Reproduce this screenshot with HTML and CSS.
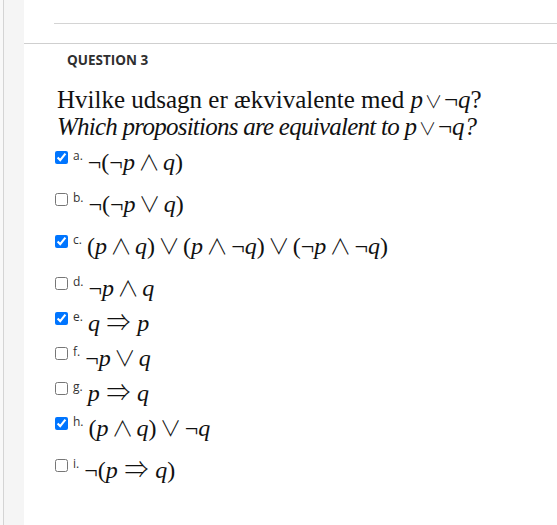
FILE: index.html
```html
<!DOCTYPE html>
<html>
<head>
<meta charset="utf-8">
<link rel="stylesheet" href="styles.css">
</head>
<body>
<div class="page">
  <div class="rail"></div>
  <div class="main">
    <div class="topbar"><div class="topline"></div></div>
    <div class="question">
      <div class="qtitle">QUESTION 3</div>
      <div class="qtext">
        <div class="qline">Hvilke udsagn er ækvivalente med <span class="m"><i>p</i><span class="op">∨</span>¬<i>q</i></span>?</div>
        <div class="qline it">Which propositions are equivalent to <span class="m"><i>p</i><span class="op">∨</span>¬<i>q</i></span>?</div>
      </div>
      <div class="options">
        <label class="opt tall"><input type="checkbox" checked><span class="lbl">a.</span><span class="m">¬(¬<i>p</i><span class="op">∧</span><i>q</i>)</span></label>
        <label class="opt tall"><input type="checkbox"><span class="lbl">b.</span><span class="m">¬(¬<i>p</i><span class="op">∨</span><i>q</i>)</span></label>
        <label class="opt tall"><input type="checkbox" checked><span class="lbl">c.</span><span class="m">(<i>p</i><span class="op">∧</span><i>q</i>)<span class="op">∨</span>(<i>p</i><span class="op">∧</span>¬<i>q</i>)<span class="op">∨</span>(¬<i>p</i><span class="op">∧</span>¬<i>q</i>)</span></label>
        <label class="opt"><input type="checkbox"><span class="lbl">d.</span><span class="m">¬<i>p</i><span class="op">∧</span><i>q</i></span></label>
        <label class="opt"><input type="checkbox" checked><span class="lbl">e.</span><span class="m"><i>q</i><span class="op arrow">⇒</span><i>p</i></span></label>
        <label class="opt"><input type="checkbox"><span class="lbl">f.</span><span class="m">¬<i>p</i><span class="op">∨</span><i>q</i></span></label>
        <label class="opt"><input type="checkbox"><span class="lbl">g.</span><span class="m"><i>p</i><span class="op arrow">⇒</span><i>q</i></span></label>
        <label class="opt tall"><input type="checkbox" checked><span class="lbl">h.</span><span class="m">(<i>p</i><span class="op">∧</span><i>q</i>)<span class="op">∨</span>¬<i>q</i></span></label>
        <label class="opt tall"><input type="checkbox"><span class="lbl">i.</span><span class="m">¬(<i>p</i><span class="op arrow">⇒</span><i>q</i>)</span></label>
      </div>
    </div>
  </div>
</div>
</body>
</html>
```
FILE: styles.css
```css
html, body {
  margin: 0;
  padding: 0;
  background: #fff;
}
.page {
  display: flex;
  min-height: 525px;
}
.rail {
  width: 3px;
  background: #f8f8f8;
  border-right: 1px solid #d4d4d4;
  flex: none;
}
.main {
  flex: 1;
  margin-left: 20px;
  background: #fff;
  box-shadow: -20px 0 0 #f5f5f5;
}
.topbar {
  height: 44px;
  border-bottom: 1px solid #cfcfcf;
  box-sizing: border-box;
}
.topline {
  margin-left: 30px;
  height: 24px;
  border-bottom: 1px solid #d4d4d4;
  box-sizing: border-box;
}
.question {
  padding: 6px 0 0 31px;
}
.qtitle {
  font-family: "Open Sans", sans-serif;
  font-weight: 700;
  font-size: 13.5px;
  color: #2f2f2f;
  margin-left: 12px;
  line-height: 20px;
}
.qtext {
  margin-top: 16px;
  font-family: "Liberation Serif", "DejaVu Serif", serif;
  font-size: 25px;
  color: #111;
  line-height: 27px;
  padding-left: 2px;
}
.qline.it {
  font-style: italic;
  letter-spacing: -0.75px;
}
.m {
  font-family: "Liberation Serif", "DejaVu Serif", serif;
  font-style: normal;
  letter-spacing: 0;
}
.m i {
  font-style: italic;
}
.op {
  font-family: "Noto Sans CJK JP", "DejaVu Sans", sans-serif;
  font-weight: 300;
  font-style: normal;
  font-size: 0.9em;
  line-height: 0;
  margin: 0 0.15em;
}
.qtext .op {
  font-size: 0.7em;
  margin: 0 0.1em;
}
.op.arrow {
  font-size: 1em;
  margin: 0 0.28em;
}
.options {
  margin-top: 8px;
}
.opt {
  display: flex;
  align-items: flex-start;
  height: 35px;
}
.opt.tall {
  height: 42px;
}
.opt input {
  margin: 3px 5px 0 0;
  width: 13px;
  height: 13px;
  flex: none;
  accent-color: #0075ff;
}
.lbl {
  font-family: "Open Sans", sans-serif;
  font-size: 12px;
  line-height: 14px;
  color: #333;
  margin-top: 1px;
  margin-right: 5px;
}
.opt .m {
  font-size: 24px;
  line-height: 24px;
  margin-top: 2px;
  color: #111;
}
```
